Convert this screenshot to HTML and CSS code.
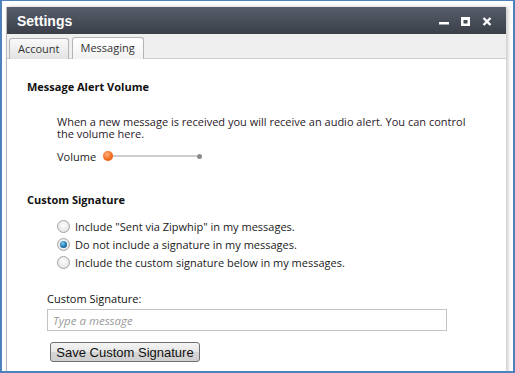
FILE: index.html
```html
<!DOCTYPE html>
<html lang="en">
<head>
    <meta charset="UTF-8">
    <title>Settings</title>
    <link rel="stylesheet" href="styles.css">
</head>
<body>
    <div class="frame">
        <div class="window">
            <!-- Title bar -->
            <div class="titlebar">
                <span class="title">Settings</span>
                <div class="controls">
                    <svg width="10" height="10" viewBox="0 0 10 10"><rect x="0" y="6" width="10" height="2.5" fill="#fff"/></svg>
                    <svg width="9" height="9" viewBox="0 0 9 9"><path d="M0 0H9V9H0Z M2.5 3H6.5V6.5H2.5Z" fill="#fff" fill-rule="evenodd"/></svg>
                    <svg width="10" height="9" viewBox="0 0 10 9"><path d="M1.5 1L8.5 8M8.5 1L1.5 8" stroke="#fff" stroke-width="2.4"/></svg>
                </div>
            </div>

            <!-- Tabs -->
            <div class="tabs">
                <div class="tab">Account</div>
                <div class="tab active">Messaging</div>
            </div>

            <div class="content">
                <h3>Message Alert Volume</h3>
                <div class="indent">
                    <p>When a new message is received you will receive an audio alert. You can control the volume here.</p>
                    <div class="volume">
                        <span>Volume</span>
                        <div class="slider">
                            <span class="knob"></span>
                            <span class="track"></span>
                            <span class="end"></span>
                        </div>
                    </div>
                </div>

                <h3 class="second">Custom Signature</h3>
                <div class="indent radios">
                    <label><input type="radio" name="sig"> Include "Sent via Zipwhip" in my messages.</label>
                    <label><input type="radio" name="sig" checked> Do not include a signature in my messages.</label>
                    <label><input type="radio" name="sig"> Include the custom signature below in my messages.</label>
                </div>

                <div class="signature">
                    <div class="sig-label">Custom Signature:</div>
                    <input type="text" class="sig-input" placeholder="Type a message">
                    <button class="save-btn">Save Custom Signature</button>
                </div>
            </div>
        </div>
    </div>
</body>
</html>
```

FILE: styles.css
```css
/* Reset */
* {
    margin: 0;
    padding: 0;
    box-sizing: border-box;
}

body {
    width: 515px;
    height: 373px;
    overflow: hidden;
    background: #fff;
    font-family: 'Open Sans', 'DejaVu Sans', sans-serif;
    font-size: 11px;
    color: #1a1a1a;
}

/* Blue outer frame */
.frame {
    width: 515px;
    height: 373px;
    border: 2px solid #4f81bd;
    border-top-width: 1px;
    padding: 6px 7px 0 4px;
    overflow: hidden;
}

/* Window */
.window {
    height: 380px;
    border-left: 1px solid #b8b8b8;
    box-shadow: 2px 0 4px rgba(0, 0, 0, 0.22);
    background: #fff;
}

.titlebar {
    height: 27px;
    background: linear-gradient(#575e6a, #3a3f48);
    display: flex;
    align-items: center;
    justify-content: space-between;
    padding: 0 14px 0 10px;
}

.title {
    font-family: 'Liberation Sans', sans-serif;
    font-weight: 700;
    font-size: 14px;
    color: #fff;
}

.controls {
    display: flex;
    align-items: center;
    gap: 12px;
    padding-top: 1px;
}

/* Tabs */
.tabs {
    height: 25px;
    background: #efefef;
    border-bottom: 1px solid #cfcfcf;
    display: flex;
    align-items: flex-end;
    gap: 3px;
    padding-left: 2px;
}

.tab {
    height: 21px;
    margin-bottom: -1px;
    padding: 0 8px;
    font-size: 11px;
    line-height: 20px;
    color: #333;
    border: 1px solid #b4b4b4;
    border-bottom: none;
    border-radius: 3px 3px 0 0;
    background: linear-gradient(#fafafa, #e2e2e2);
}

.tab.active {
    height: 22px;
    background: linear-gradient(#ffffff, #f2f2f2);
}

/* Content */
.content {
    padding: 20px 20px 0 20px;
}

h3 {
    font-size: 11px;
    font-weight: 700;
    color: #111;
    line-height: 16px;
}

h3.second {
    margin-top: 29px;
}

.indent {
    padding-left: 30px;
}

.indent p {
    width: 414px;
    margin-top: 21px;
    line-height: 12px;
    color: #2a1a2a;
}

.volume {
    display: flex;
    align-items: center;
    margin-top: 9px;
    height: 14px;
}

.slider {
    display: flex;
    align-items: center;
    margin-left: 7px;
}

.knob {
    width: 10px;
    height: 10px;
    border-radius: 50%;
    background: radial-gradient(circle at 40% 35%, #ffb07a, #f06a1e 55%, #d9530e);
    box-shadow: 0 0 1px #f7b38a;
}

.track {
    width: 84px;
    height: 2px;
    background: #cfcfcf;
}

.end {
    width: 5px;
    height: 5px;
    border-radius: 50%;
    background: #8a8a8a;
}

/* Radios */
.radios {
    margin-top: 9px;
    display: flex;
    flex-direction: column;
}

.radios label {
    display: flex;
    align-items: center;
    height: 18px;
    gap: 5px;
}

.radios input {
    appearance: none;
    width: 13px;
    height: 13px;
    border-radius: 50%;
    border: 1px solid #a3a3a3;
    background: radial-gradient(circle at 50% 40%, #fdfdfd, #dcdcdc);
    position: relative;
}

.radios input:checked::after {
    content: "";
    position: absolute;
    left: 2px;
    top: 2px;
    width: 7px;
    height: 7px;
    border-radius: 50%;
    background: radial-gradient(circle at 40% 35%, #7ecbf3, #1c6ea8 60%, #0f4f85);
}

/* Signature form */
.signature {
    padding-left: 20px;
    margin-top: 21px;
}

.sig-label {
    line-height: 14px;
    color: #111;
}

.sig-input {
    display: block;
    margin-top: 3px;
    width: 400px;
    height: 22px;
    border: 1px solid #c4c4c4;
    padding: 0 5px;
    font-family: 'Open Sans', sans-serif;
    font-size: 11.5px;
    outline: none;
}

.sig-input::placeholder {
    color: #9a9a9a;
    font-style: italic;
}

.save-btn {
    display: block;
    margin: 11px 0 0 3px;
    width: 150px;
    height: 20px;
    font-family: 'Liberation Sans', sans-serif;
    font-size: 13px;
    color: #111;
    border: 1px solid #707070;
    border-radius: 3px;
    background: linear-gradient(#f4f4f4 0%, #e6e6e6 50%, #d6d6d6 51%, #cfcfcf 100%);
}
```
